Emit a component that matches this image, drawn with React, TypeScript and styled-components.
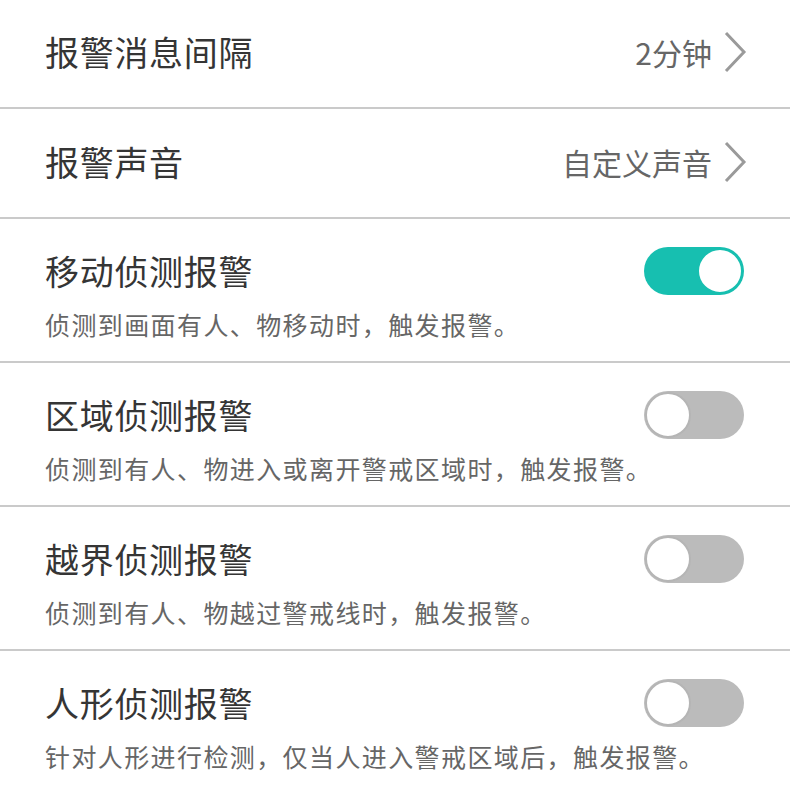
import * as React from 'react';
import styled, { createGlobalStyle } from 'styled-components';

const GlobalStyle = createGlobalStyle`
  body {
    margin: 0;
    background: #ffffff;
    font-family: "Noto Sans CJK SC", "Noto Sans", sans-serif;
  }
`;

const List = styled.div`
  width: 790px;
  display: flex;
  flex-direction: column;
`;

const Row = styled.div<{ $h: number }>`
  display: flex;
  align-items: center;
  justify-content: space-between;
  height: ${(p) => p.$h - 3}px;
  padding: 0 45px 3px 45px;
  border-bottom: 2px solid #cacaca;
  box-sizing: content-box;
`;

const SwitchRow = styled.div<{ $last?: boolean }>`
  display: flex;
  flex-direction: column;
  padding: 27px 45px 0 45px;
  height: ${(p) => (p.$last ? '121px' : '115px')};
  border-bottom: ${(p) => (p.$last ? 'none' : '2px solid #cacaca')};
`;

const TopLine = styled.div`
  display: flex;
  align-items: center;
  justify-content: space-between;
  height: 50px;
`;

const Title = styled.div`
  font-size: 34px;
  letter-spacing: 0.7px;
  line-height: 50px;
  color: #353535;
`;

const Sub = styled.div`
  margin-top: 13px;
  font-size: 25px;
  letter-spacing: 1.4px;
  line-height: 30px;
  color: #666666;
`;

const Value = styled.div`
  display: flex;
  align-items: center;
  gap: 11px;
  font-size: 30px;
  color: #666666;
  margin-right: -2px;
`;

const Track = styled.div<{ $on: boolean }>`
  position: relative;
  width: 100px;
  height: 48px;
  border-radius: 24px;
  background: ${(p) => (p.$on ? '#17bfb0' : '#bbbbbb')};
  margin-right: 1px;
`;

const Knob = styled.div<{ $on: boolean }>`
  position: absolute;
  top: 1px;
  ${(p) => (p.$on ? 'right: 1px;' : 'left: 1px;')}
  width: 42px;
  height: 42px;
  border-radius: 50%;
  background: #ffffff;
  border: 2px solid ${(p) => (p.$on ? '#17bfb0' : '#b5b5b5')};
`;

const Chevron = () => (
  <svg width="24" height="42" viewBox="0 0 24 42">
    <polyline points="3,2 21,21 3,40" fill="none" stroke="#9a9a9a" strokeWidth="3" />
  </svg>
);

const Switch = ({ on }: { on: boolean }) => (
  <Track $on={on}>
    <Knob $on={on} />
  </Track>
);

const items = [
  { title: '移动侦测报警', sub: '侦测到画面有人、物移动时，触发报警。', on: true },
  { title: '区域侦测报警', sub: '侦测到有人、物进入或离开警戒区域时，触发报警。', on: false },
  { title: '越界侦测报警', sub: '侦测到有人、物越过警戒线时，触发报警。', on: false },
  { title: '人形侦测报警', sub: '针对人形进行检测，仅当人进入警戒区域后，触发报警。', on: false },
];

export default function App() {
  return (
    <>
      <GlobalStyle />
      <List>
        <Row $h={107}>
          <Title>报警消息间隔</Title>
          <Value>
            2分钟
            <Chevron />
          </Value>
        </Row>
        <Row $h={108}>
          <Title>报警声音</Title>
          <Value>
            自定义声音
            <Chevron />
          </Value>
        </Row>
        {items.map((it, i) => (
          <SwitchRow key={it.title} $last={i === items.length - 1}>
            <TopLine>
              <Title>{it.title}</Title>
              <Switch on={it.on} />
            </TopLine>
            <Sub>{it.sub}</Sub>
          </SwitchRow>
        ))}
      </List>
    </>
  );
}
